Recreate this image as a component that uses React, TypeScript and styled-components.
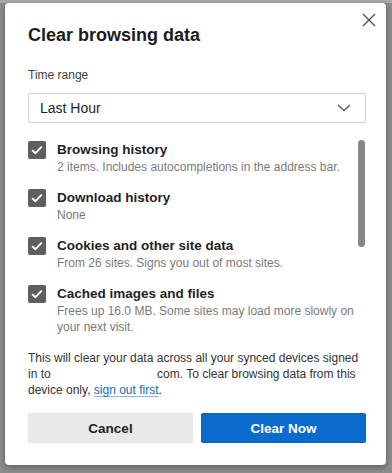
import styled, { createGlobalStyle } from 'styled-components';

const GlobalStyle = createGlobalStyle`
  html, body {
    margin: 0;
    height: 100%;
  }
  body {
    background: #8d8d8d;
    font-family: "Liberation Sans", Arial, Helvetica, sans-serif;
    -webkit-font-smoothing: antialiased;
  }
  #root {
    height: 100%;
  }
`;

interface DataItem {
  title: string;
  desc: string;
  checked: boolean;
}

const items: DataItem[] = [
  { title: 'Browsing history', desc: '2 items. Includes autocompletions in the address bar.', checked: true },
  { title: 'Download history', desc: 'None', checked: true },
  { title: 'Cookies and other site data', desc: 'From 26 sites. Signs you out of most sites.', checked: true },
  {
    title: 'Cached images and files',
    desc: 'Frees up 16.0 MB. Some sites may load more slowly on your next visit.',
    checked: true,
  },
];

export default function App() {
  return (
    <Backdrop>
      <GlobalStyle />
      <Dialog>
        <Header>
          <Title>Clear browsing data</Title>
          <CloseButton aria-label="Close">
            <svg width="14" height="14" viewBox="0 0 14 14">
              <path d="M1 1 L13 13 M13 1 L1 13" stroke="#555" strokeWidth="1.4" fill="none" />
            </svg>
          </CloseButton>
        </Header>

        <FieldLabel>Time range</FieldLabel>
        <Select>
          <span>Last Hour</span>
          <svg width="14" height="8" viewBox="0 0 14 8">
            <path d="M1 1 L7 6.5 L13 1" stroke="#555" strokeWidth="1.3" fill="none" />
          </svg>
        </Select>

        <List>
          <Items>
            {items.map((item) => (
              <Item key={item.title}>
                <Checkbox $checked={item.checked}>
                  <svg width="12" height="10" viewBox="0 0 12 10">
                    <path d="M1.2 5.2 L4.4 8.2 L10.8 1.6" stroke="#fff" strokeWidth="2" fill="none" />
                  </svg>
                </Checkbox>
                <ItemText>
                  <ItemTitle>{item.title}</ItemTitle>
                  <ItemDesc>{item.desc}</ItemDesc>
                </ItemText>
              </Item>
            ))}
          </Items>
          <ScrollTrack>
            <ScrollThumb />
          </ScrollTrack>
        </List>

        <Notice>
          This will clear your data across all your synced devices signed in to <Redacted />
          com. To clear browsing data from this device only, <NoticeLink href="#">sign out first</NoticeLink>.
        </Notice>

        <Buttons>
          <Button $primary={false}>Cancel</Button>
          <Button $primary>Clear Now</Button>
        </Buttons>
      </Dialog>
    </Backdrop>
  );
}

const Backdrop = styled.div`
  min-height: 100%;
  box-sizing: border-box;
  padding: 3px 6px 0 5px;
  background: linear-gradient(#a9a9a9 0, #a9a9a9 3px, #8d8d8d 3px);
`;

const Dialog = styled.div`
  width: 381px;
  box-sizing: border-box;
  background: #fff;
  border-radius: 4px;
  box-shadow: 0 2px 6px rgba(0, 0, 0, 0.35);
  padding: 20px 20px 22px 23px;
  display: flex;
  flex-direction: column;
`;

const Header = styled.div`
  display: flex;
  justify-content: space-between;
  align-items: flex-start;
`;

const Title = styled.h1`
  margin: 0;
  font-size: 18px;
  line-height: 24px;
  font-weight: 700;
  color: #1b1b1b;
`;

const CloseButton = styled.button`
  width: 24px;
  height: 24px;
  margin: -15px -15px 0 0;
  padding: 0;
  border: none;
  background: transparent;
  display: flex;
  align-items: center;
  justify-content: center;
  cursor: pointer;
`;

const FieldLabel = styled.div`
  margin-top: 20px;
  font-size: 12px;
  line-height: 16px;
  color: #444;
`;

const Select = styled.div`
  margin-top: 10px;
  height: 30px;
  box-sizing: border-box;
  border: 1px solid #cfcfcf;
  border-radius: 2px;
  padding: 0 14px 0 11px;
  display: flex;
  align-items: center;
  justify-content: space-between;
  font-size: 14px;
  color: #1f1f1f;
`;

const List = styled.div`
  margin-top: 18px;
  display: flex;
`;

const Items = styled.div`
  flex: 1;
  display: flex;
  flex-direction: column;
  gap: 14px;
`;

const Item = styled.div`
  display: flex;
  gap: 11px;
`;

const Checkbox = styled.div<{ $checked: boolean }>`
  flex: none;
  width: 18px;
  height: 18px;
  border-radius: 2px;
  background: ${(props) => (props.$checked ? '#5e5e5e' : '#fff')};
  display: flex;
  align-items: center;
  justify-content: center;
`;

const ItemText = styled.div`
  display: flex;
  flex-direction: column;
`;

const ItemTitle = styled.div`
  font-size: 13.5px;
  line-height: 18px;
  font-weight: 700;
  color: #1f1f1f;
`;

const ItemDesc = styled.div`
  font-size: 12px;
  line-height: 16px;
  color: #7a7a7a;
`;

const ScrollTrack = styled.div`
  flex: none;
  width: 8px;
  padding-right: 1px;
  box-sizing: border-box;
  display: flex;
  justify-content: flex-end;
`;

const ScrollThumb = styled.div`
  width: 7px;
  height: 107px;
  margin-top: -1px;
  border-radius: 4px;
  background: #878787;
`;

const Notice = styled.p`
  margin: 15px 0 0;
  font-size: 12px;
  line-height: 16px;
  color: #333;
`;

const Redacted = styled.span`
  display: inline-block;
  width: 103px;
`;

const NoticeLink = styled.a`
  color: #1769c4;
  text-decoration: underline;
  text-decoration-color: #8fb4e0;
  text-underline-offset: 2px;
`;

const Buttons = styled.div`
  margin-top: 15px;
  display: grid;
  grid-template-columns: 1fr 1fr;
  gap: 8px;
`;

const Button = styled.button<{ $primary: boolean }>`
  height: 30px;
  border-radius: 2px;
  border: 1px solid ${(props) => (props.$primary ? '#0a64c2' : '#e6e6e6')};
  background: ${(props) => (props.$primary ? '#0a6bcd' : '#e9e9e9')};
  color: ${(props) => (props.$primary ? '#fff' : '#222')};
  font-family: inherit;
  font-size: 13.5px;
  font-weight: 700;
  cursor: pointer;
`;
